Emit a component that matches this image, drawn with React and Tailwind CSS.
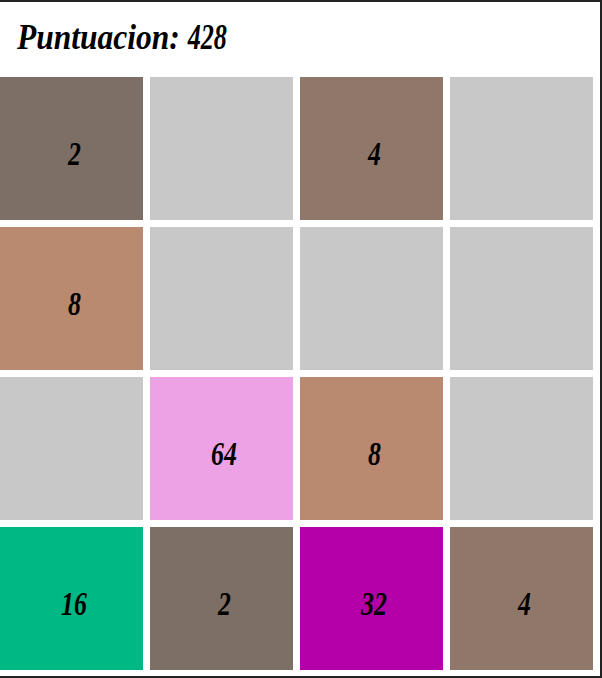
const cells = [
  ["2", "bg-[#7d6f66]"], ["", "bg-[#c8c8c8]"], ["4", "bg-[#8f7869]"], ["", "bg-[#c8c8c8]"],
  ["8", "bg-[#b98a70]"], ["", "bg-[#c8c8c8]"], ["", "bg-[#c8c8c8]"], ["", "bg-[#c8c8c8]"],
  ["", "bg-[#c8c8c8]"], ["64", "bg-[#eea2e6]"], ["8", "bg-[#b98a70]"], ["", "bg-[#c8c8c8]"],
  ["16", "bg-[#00b884]"], ["2", "bg-[#7d6f66]"], ["32", "bg-[#b400a8]"], ["4", "bg-[#8f7869]"],
];

export default function App() {
  return (
    <div className="w-[602px] h-[678px] bg-[#222222] pt-[2px] pr-[2px] pb-[2px] overflow-hidden">
      <div className="w-[600px] h-[674px] bg-white font-['Liberation_Serif',serif] italic text-black">
        <div className="h-[75px] flex items-center pl-[17px] pb-[5px]">
          <span className="inline-block origin-left scale-x-[0.875] whitespace-nowrap text-[36px] leading-none font-bold">
            Puntuacion: <span className="inline-block origin-left scale-x-[0.83]">428</span>
          </span>
        </div>
        <div className="grid grid-cols-[repeat(4,143px)] grid-rows-[repeat(4,143px)] gap-[7px]">
          {cells.map(([value, color], i) => (
            <div key={i} className={`${color} flex items-center justify-center pt-[11px] pl-[5px] text-[34px] leading-none font-bold`}>
              <span className="inline-block scale-x-[0.76]">{value}</span>
            </div>
          ))}
        </div>
      </div>
    </div>
  );
}
